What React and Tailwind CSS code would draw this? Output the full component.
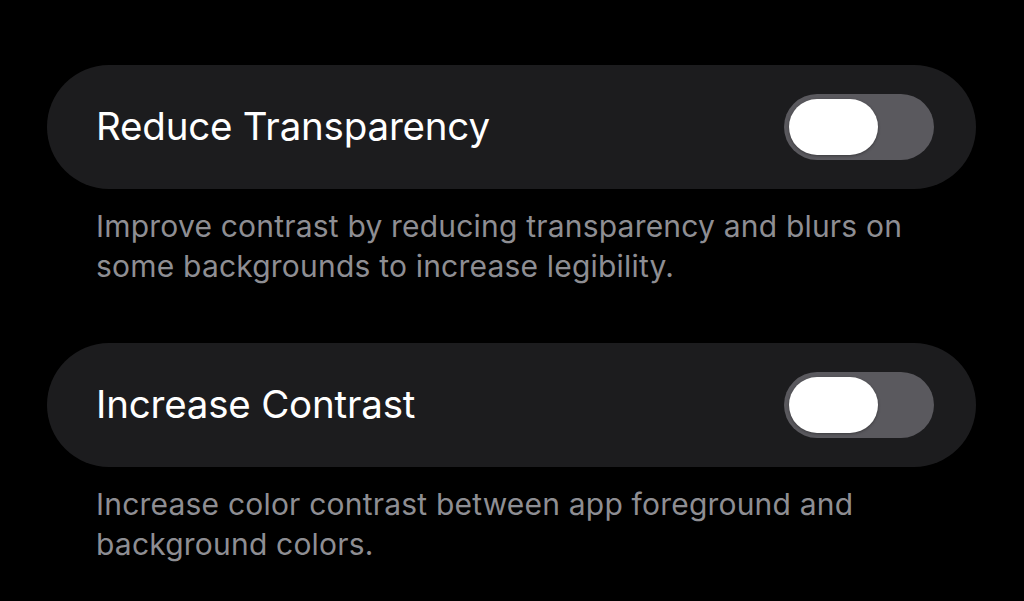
const settings = [
  {
    title: "Reduce Transparency",
    lines: [
      "Improve contrast by reducing transparency and blurs on",
      "some backgrounds to increase legibility.",
    ],
  },
  {
    title: "Increase Contrast",
    lines: [
      "Increase color contrast between app foreground and",
      "background colors.",
    ],
  },
];

const Toggle = () => (
  <div className="w-[150px] h-[66px] rounded-full bg-[#5a595e] p-[5px] flex items-center">
    <div className="w-[89px] h-[56px] rounded-full bg-white shadow-[0_1px_3px_rgba(0,0,0,0.35)]" />
  </div>
);

export default function App() {
  return (
    <div
      className="w-[1024px] h-[601px] bg-black overflow-hidden pt-[65px] px-[47px] pr-[48px] flex flex-col gap-[57px]"
      style={{ fontFamily: "Inter, 'Noto Sans', sans-serif" }}
    >
      {settings.map((s) => (
        <div key={s.title} className="flex flex-col">
          <div className="h-[124px] rounded-full bg-[#1c1c1e] flex items-center justify-between pl-[49px] pr-[42px]">
            <span className="text-white text-[38.5px] tracking-[-0.2px]">{s.title}</span>
            <Toggle />
          </div>
          <p className="mt-[17px] pl-[49px] text-[#8e8e93] text-[30px] leading-[40px] tracking-[0.2px]">
            {s.lines[0]}
            <br />
            {s.lines[1]}
          </p>
        </div>
      ))}
    </div>
  );
}
